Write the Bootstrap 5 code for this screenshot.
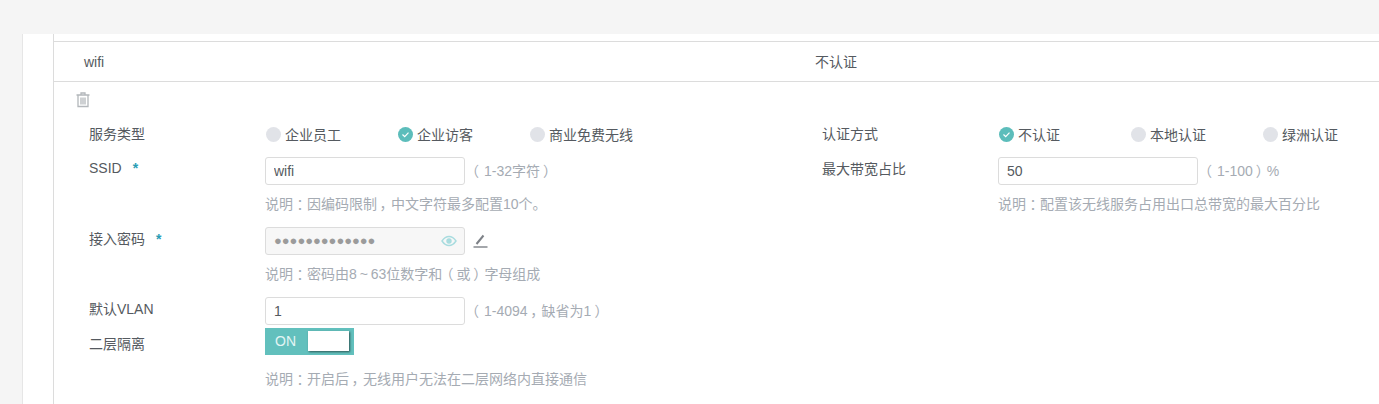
<!DOCTYPE html>
<html lang="zh-CN">
<head>
  <meta charset="UTF-8">
  <meta name="viewport" content="width=device-width, initial-scale=1.0">
  <title>wifi</title>
  <link href="https://cdn.jsdelivr.net/npm/bootstrap@5.3.0/dist/css/bootstrap.min.css" rel="stylesheet">
  <style>
    html, body { height: 404px; overflow: hidden; }
    body { background: #f5f5f5; font-family: "Liberation Sans", "Noto Sans CJK SC", sans-serif; font-size: 14px; color: #555a60; line-height: 20px; }
    .page-wrap { padding: 34px 0 0 22px; height: 404px; }
    .outer-panel { background: #fff; border-left: 1px solid #e6e6e6; padding-left: 30px; height: 370px; }
    .inner-panel { border-left: 1px solid #dcdcdc; padding-top: 7px; height: 370px; }
    .list-head { height: 41px; border-top: 1px solid #dcdcdc; border-bottom: 1px solid #dcdcdc; padding-left: 30px; }
    .head-a { width: 731px; }
    .del-icon { margin: 10px 0 0 22px; height: 16px; display: block; }
    .form-cols { padding-left: 35px; margin-top: 17px; }
    .col-left { width: 733px; }
    .field-label { width: 176px; flex-shrink: 0; position: relative; top: -2px; }
    .label-ssid { top: -3px; }
    .label-switch { top: 2px; }
    .req { color: #2a9db5; margin-left: 11px; font-weight: 700; }
    .radio-row { height: 20px; margin-bottom: 12px; }
    .radio-row .field-label { width: 177px; top: -1px; }
    .radio-item { display: flex; align-items: center; gap: 4px; }
    .radio-a { width: 132px; }
    .radio-b { width: 132px; }
    .dot { width: 15px; height: 15px; border-radius: 50%; background: #e1e3e8; flex-shrink: 0; display: block; position: relative; top: -1px; }
    .dot svg { display: block; }
    .dot-on { background: #5cbdbb; }
    .text-field { width: 200px; height: 28px; border: 1px solid #dcdcdc; border-radius: 3px; padding: 0 8px; font-size: 14px; color: #555a60; background: #fff; font-family: inherit; }
    .text-field:focus { outline: none; }
    .field-row { height: 28px; }
    .tip { color: #a5abb3; margin-left: 3px; white-space: nowrap; }
    .punct { display: inline-block; width: 1em; text-align: center; font-feature-settings: "palt"; }
    .punct-open { margin-right: 2px; }
    .hint { color: #a5abb3; margin: 9px 0 13px 176px; height: 20px; white-space: nowrap; }
    .hint-last { margin-top: 14px; }
    .pwd-box { width: 200px; height: 28px; border: 1px solid #dcdcdc; border-radius: 3px; background: #f7f7f7; padding: 0 7px 0 8px; }
    .pwd-dots { color: #9b9b9b; font-size: 13px; letter-spacing: -0.05px; }
    .pen-icon { margin-left: 8px; }
    .switch-row { height: 27px; margin-top: 3px; }
    .switch-box { width: 89px; height: 27px; background: #62c0bd; color: #e3f5f4; padding: 3px 5px 0 10px; }
    .switch-knob { width: 41px; height: 20px; background: #fff; box-shadow: 1px 1px 2px rgba(0,0,0,.55); }
  </style>
</head>
<body>

<div class="page-wrap">
  <div class="outer-panel">
    <div class="inner-panel">

      <div class="list-head d-flex align-items-center">
        <div class="head-a">wifi</div>
        <div>不认证</div>
      </div>

      <svg class="del-icon" width="14" height="16" viewBox="0 0 14 16" fill="none" stroke="#b3b7bb" stroke-width="1.3">
        <path d="M0.500 3h13M5 3V1h4v2M2 3v11.500h10V3M5 5.500v7M7 5.500v7M9 5.500v7"/>
      </svg>

      <div class="form-cols d-flex">
        <div class="col-left">
          <div class="radio-row d-flex align-items-center">
            <div class="field-label">服务类型</div>
            <div class="radio-item radio-a"><i class="dot"></i><span>企业员工</span></div>
            <div class="radio-item radio-b"><i class="dot dot-on"><svg width="15" height="15" viewBox="0 0 15 15" fill="none" stroke="#fff" stroke-width="1.2"><path d="M4.500 7.500l2.200 2.200 3.800-4"/></svg></i><span>企业访客</span></div>
            <div class="radio-item"><i class="dot"></i><span>商业免费无线</span></div>
          </div>

          <div class="field-row d-flex align-items-center">
            <div class="field-label label-ssid">SSID<span class="req">*</span></div>
            <input class="text-field" type="text" value="wifi">
            <span class="tip"><span class="punct punct-open">（</span>1-32字符<span class="punct">）</span></span>
          </div>
          <div class="hint">说明<span class="punct">：</span>因编码限制<span class="punct">，</span>中文字符最多配置10个。</div>

          <div class="field-row d-flex align-items-center">
            <div class="field-label">接入密码<span class="req">*</span></div>
            <div class="pwd-box d-flex align-items-center justify-content-between">
              <span class="pwd-dots">●●●●●●●●●●●●●</span>
              <svg width="16" height="12" viewBox="0 0 16 12" fill="none" stroke="#a8dcdf" stroke-width="1.4"><path d="M1 6c2-3 4.300-4.500 7-4.500S13 3 15 6c-2 3-4.300 4.500-7 4.500S3 9 1 6z"/><circle cx="8" cy="6" r="2" fill="#a8dcdf"/></svg>
            </div>
            <svg class="pen-icon" width="15" height="14" viewBox="0 0 15 14" fill="none" stroke="#7d8187"><path d="M3.500 10L10.500 1.500" stroke-width="2"/><path d="M0.500 13h14" stroke-width="1.400"/></svg>
          </div>
          <div class="hint">说明<span class="punct">：</span>密码由8<span class="punct">~</span>63位数字和<span class="punct">（</span>或<span class="punct">）</span>字母组成</div>

          <div class="field-row d-flex align-items-center">
            <div class="field-label">默认VLAN</div>
            <input class="text-field" type="text" value="1">
            <span class="tip"><span class="punct punct-open">（</span>1-4094<span class="punct">，</span>缺省为1<span class="punct">）</span></span>
          </div>

          <div class="switch-row d-flex align-items-center">
            <div class="field-label label-switch">二层隔离</div>
            <div class="switch-box d-flex justify-content-between">
              <span>ON</span>
              <div class="switch-knob"></div>
            </div>
          </div>
          <div class="hint hint-last">说明<span class="punct">：</span>开启后<span class="punct">，</span>无线用户无法在二层网络内直接通信</div>
        </div>

        <div class="col-right">
          <div class="radio-row d-flex align-items-center">
            <div class="field-label">认证方式</div>
            <div class="radio-item radio-a"><i class="dot dot-on"><svg width="15" height="15" viewBox="0 0 15 15" fill="none" stroke="#fff" stroke-width="1.2"><path d="M4.500 7.500l2.200 2.200 3.800-4"/></svg></i><span>不认证</span></div>
            <div class="radio-item radio-b"><i class="dot"></i><span>本地认证</span></div>
            <div class="radio-item"><i class="dot"></i><span>绿洲认证</span></div>
          </div>
          <div class="field-row d-flex align-items-center">
            <div class="field-label">最大带宽占比</div>
            <input class="text-field" type="text" value="50">
            <span class="tip"><span class="punct punct-open">（</span>1-100<span class="punct">）</span>%</span>
          </div>
          <div class="hint">说明<span class="punct">：</span>配置该无线服务占用出口总带宽的最大百分比</div>
        </div>
      </div>

    </div>
  </div>
</div>

<script src="https://cdn.jsdelivr.net/npm/bootstrap@5.3.0/dist/js/bootstrap.bundle.min.js"></script>
</body>
</html>
